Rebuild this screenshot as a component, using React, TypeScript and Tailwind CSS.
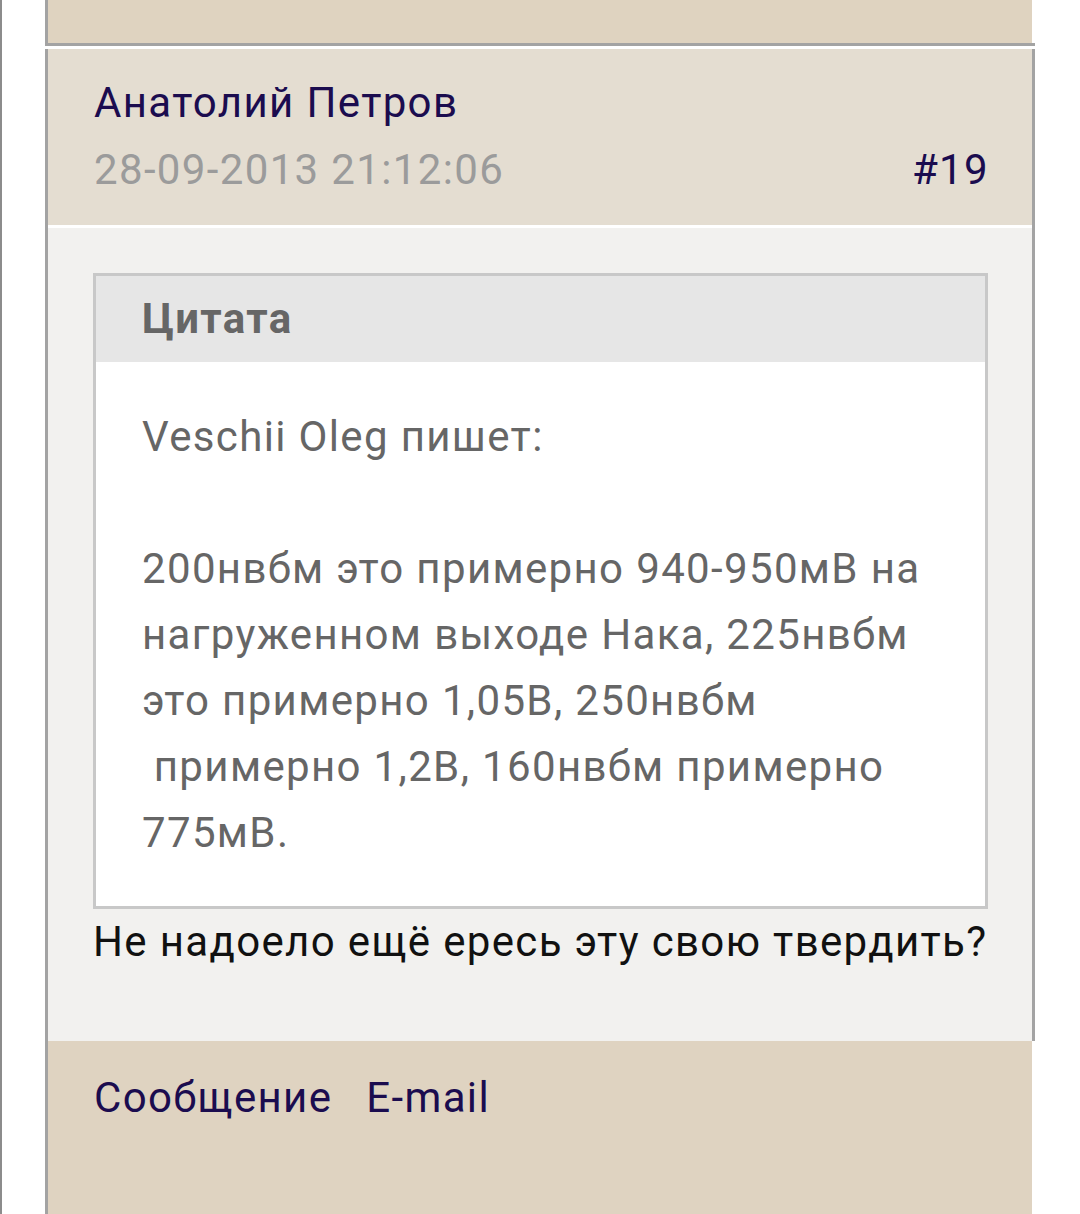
import React from "react";

export default function App() {
  return (
    <div
      className="min-h-[1214px] bg-white flex tracking-[1.35px]"
      style={{ fontFamily: "Roboto, 'Noto Sans', sans-serif" }}
    >
      <div className="w-[2px] shrink-0 bg-[#8c8c8c]" />
      <div className="ml-[43px] w-[990px] flex flex-col">
        {/* previous post footer */}
        <div className="border-l-[3px] border-b-[3px] border-[#a3a3a3]">
          <div className="h-[43px] mr-[3px] bg-[#dfd3c0]" />
        </div>

        {/* post */}
        <div className="mt-[3px] flex-1 flex flex-col border-l-[3px] border-[#a3a3a3]">
          {/* header */}
          <div className="bg-[#e4ddd1] border-r-[3px] border-r-[#a3a3a3] pl-[46px] pr-[43px] pt-[20px] pb-[22px] text-[42px] leading-[67px]">
            <div className="text-[#1b0c4f]">Анатолий Петров</div>
            <div className="flex justify-between">
              <span className="text-[#9b9b9b]">28-09-2013 21:12:06</span>
              <span className="text-[#1b0c4f]">#19</span>
            </div>
          </div>
          <div className="h-[3px] bg-white border-r-[3px] border-r-[#a3a3a3]" />

          {/* body */}
          <div className="bg-[#f2f1ef] border-r-[3px] border-r-[#a3a3a3] pl-[45px] pr-[44px] pt-[45px] pb-[66px] text-[42px] leading-[66px]">
            <div className="border-[3px] border-[#c8c8c8]">
              <div className="h-[86px] bg-[#e6e6e6] flex items-center pl-[46px] font-bold text-[#666666]">
                Цитата
              </div>
              <div className="bg-white pl-[46px] pr-[20px] pt-[42px] pb-[40px] text-[#666666] whitespace-nowrap">
                Veschii Oleg пишет:
                <br />
                <br />
                200нвбм это примерно 940-950мВ на
                <br />
                нагруженном выходе Нака, 225нвбм
                <br />
                это примерно 1,05В, 250нвбм
                <br />
                {"\u00a0"}примерно 1,2В, 160нвбм примерно
                <br />
                775мВ.
              </div>
            </div>
            <div className="text-[#111111] whitespace-nowrap">
              Не надоело ещё ересь эту свою твердить?
            </div>
          </div>

          {/* footer */}
          <div className="flex-1 mr-[3px] bg-[#dfd3c1] pl-[46px] pt-[24px] text-[42px] leading-[66px] text-[#1b0c4f] flex gap-[34px] items-start">
            <span>Сообщение</span>
            <span>E-mail</span>
          </div>
        </div>
      </div>
    </div>
  );
}
